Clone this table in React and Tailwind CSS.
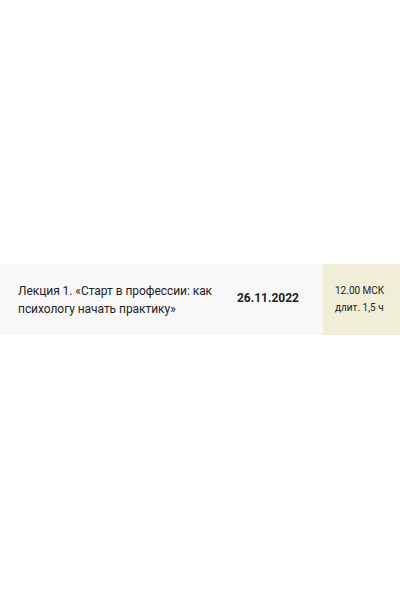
export default function App() {
  return (
    <div className="w-[400px] h-[600px] bg-white flex flex-col" style={{ fontFamily: "Roboto, 'Noto Sans', sans-serif" }}>
      <div className="h-[264px]" />
      <div className="flex h-[71px] bg-[#f8f8f8]">
        <div className="w-[218px] pl-[18px] pr-[4px] flex items-center text-[12px] leading-[18px] text-[#222] tracking-[-0.05px]">
          Лекция 1. «Старт в профессии: как психологу начать практику»
        </div>
        <div className="flex-1 flex items-center justify-center text-[12px] font-bold text-[#222] pb-[4px] pr-[5px]">
          26.11.2022
        </div>
        <div className="w-[77px] bg-[#f1eed8] pl-[12px] flex flex-col justify-center text-[10px] leading-[17px] text-[#222] pb-[2px]">
          <div>12.00 МСК</div>
          <div>длит. 1,5 ч</div>
        </div>
      </div>
    </div>
  );
}
